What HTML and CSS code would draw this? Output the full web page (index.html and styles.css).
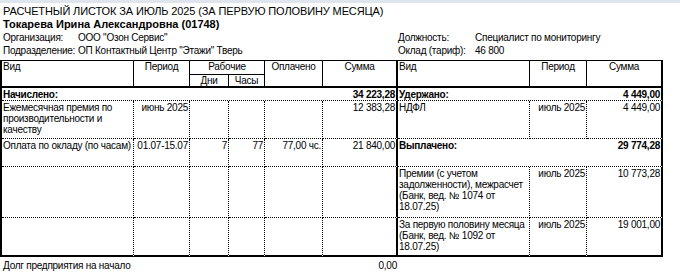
FILE: index.html
```html
<!DOCTYPE html>
<html lang="ru">
<head>
<meta charset="utf-8">
<title>Расчетный листок</title>
<link rel="stylesheet" href="styles.css">
</head>
<body>
<div class="band"></div>
<div class="sheet">
  <div class="title">РАСЧЕТНЫЙ ЛИСТОК ЗА ИЮЛЬ 2025 (ЗА ПЕРВУЮ ПОЛОВИНУ МЕСЯЦА)</div>
  <div class="name">Токарева Ирина Александровна (01748)</div>
  <div class="info">
    <span>Организация:</span><span>ООО "Озон Сервис"</span>
    <span>Должность:</span><span>Специалист по мониторингу</span>
    <span>Подразделение:</span><span>ОП Контактный Центр "Этажи" Тверь</span>
    <span>Оклад (тариф):</span><span>46 800</span>
  </div>
  <table class="slip">
    <colgroup>
      <col class="c-kind"><col class="c-period"><col class="c-days"><col class="c-hours"><col class="c-paid"><col class="c-sum">
      <col class="c-kind2"><col class="c-period2"><col class="c-sum2">
    </colgroup>
    <tr class="h1">
      <th rowspan="2" class="left">Вид</th>
      <th rowspan="2">Период</th>
      <th colspan="2" class="sub">Рабочие</th>
      <th rowspan="2">Оплачено</th>
      <th rowspan="2" class="mid">Сумма</th>
      <th rowspan="2" class="left">Вид</th>
      <th rowspan="2">Период</th>
      <th rowspan="2" class="end">Сумма</th>
    </tr>
    <tr class="h2">
      <th>Дни</th>
      <th>Часы</th>
    </tr>
    <tr class="r-total">
      <td colspan="6" class="mid"><div class="split bold"><span>Начислено:</span><span>34 223,28</span></div></td>
      <td colspan="3" class="end"><div class="split bold"><span>Удержано:</span><span>4 449,00</span></div></td>
    </tr>
    <tr class="r-a">
      <td>Ежемесячная премия по производительности и качеству</td>
      <td class="num">июнь 2025</td>
      <td></td>
      <td></td>
      <td></td>
      <td class="num mid">12 383,28</td>
      <td>НДФЛ</td>
      <td class="num">июль 2025</td>
      <td class="num end">4 449,00</td>
    </tr>
    <tr class="r-b">
      <td>Оплата по окладу (по часам)</td>
      <td class="num">01.07-15.07</td>
      <td class="num">7</td>
      <td class="num">77</td>
      <td class="num">77,00 чс.</td>
      <td class="num mid">21 840,00</td>
      <td colspan="3" class="end"><div class="split bold"><span>Выплачено:</span><span>29 774,28</span></div></td>
    </tr>
    <tr class="r-c">
      <td></td>
      <td></td>
      <td></td>
      <td></td>
      <td></td>
      <td class="mid"></td>
      <td>Премии (с учетом задолженности), межрасчет (Банк, вед. № 1074 от 18.07.25)</td>
      <td class="num">июль 2025</td>
      <td class="num end">10 773,28</td>
    </tr>
    <tr class="r-d last">
      <td></td>
      <td></td>
      <td></td>
      <td></td>
      <td></td>
      <td class="mid"></td>
      <td>За первую половину месяца (Банк, вед. № 1092 от 18.07.25)</td>
      <td class="num">июль 2025</td>
      <td class="num end">19 001,00</td>
    </tr>
  </table>
  <div class="debt"><span>Долг предприятия на начало</span><span>0,00</span></div>
</div>
</body>
</html>
```

FILE: styles.css
```css
* { box-sizing: border-box; }

body {
  margin: 0;
  background: #ffffff;
  color: #000000;
  font-family: "Liberation Sans", Arial, sans-serif;
}

.band {
  height: 3px;
  background: #dfe5ec;
}

.title {
  padding: 2px 0 0 3px;
  font-size: 11px;
  letter-spacing: -0.12px;
  line-height: 12px;
}

.name {
  margin-top: 1px;
  padding-left: 3px;
  font-size: 11px;
  line-height: 12px;
  font-weight: bold;
}

.info {
  margin-top: 1px;
  padding-left: 3px;
  display: grid;
  grid-template-columns: 75px 320px 77px auto;
  font-size: 10px;
  letter-spacing: -0.25px;
  line-height: 13px;
  white-space: nowrap;
}

.slip {
  margin-top: 3px;
  width: 663px;
  table-layout: fixed;
  border-collapse: separate;
  border-spacing: 0;
  border-left: 2px solid #000;
  border-top: 1px solid #000;
}

.c-kind { width: 132px; }
.c-period { width: 56px; }
.c-days { width: 39px; }
.c-hours { width: 36px; }
.c-paid { width: 58px; }
.c-sum { width: 75px; }
.c-kind2 { width: 132px; }
.c-period2 { width: 57px; }
.c-sum2 { width: 76px; }

.slip th,
.slip td {
  padding: 1px 1px 0 1px;
  vertical-align: top;
  font-size: 10px;
  letter-spacing: -0.25px;
  line-height: 11px;
  border-right: 1px dotted #000;
  border-bottom: 1px dotted #000;
  text-align: left;
  overflow: hidden;
}

.slip th {
  padding-top: 0;
  font-weight: normal;
  text-align: center;
  border-right: 1px solid #000;
  border-bottom: 2px solid #000;
}

.slip th.left { text-align: left; }
.slip th.sub { border-bottom: 1px solid #000; }

.slip .mid,
.slip .end { border-right: 2px solid #000; }

.slip .last td { border-bottom: 2px solid #000; }

.slip td.num { text-align: right; white-space: nowrap; }

.h1 { height: 14px; }
.h2 { height: 13px; }
.r-total { height: 13px; }
.r-a { height: 38px; }
.r-b { height: 28px; }
.r-c { height: 51px; }
.r-d { height: 39px; }

.split {
  display: flex;
  justify-content: space-between;
  white-space: nowrap;
}

.bold { font-weight: bold; }

.debt {
  margin-top: 2px;
  width: 397px;
  padding: 0 0 0 3px;
  display: flex;
  justify-content: space-between;
  font-size: 10px;
  letter-spacing: -0.25px;
  line-height: 13px;
}
```
